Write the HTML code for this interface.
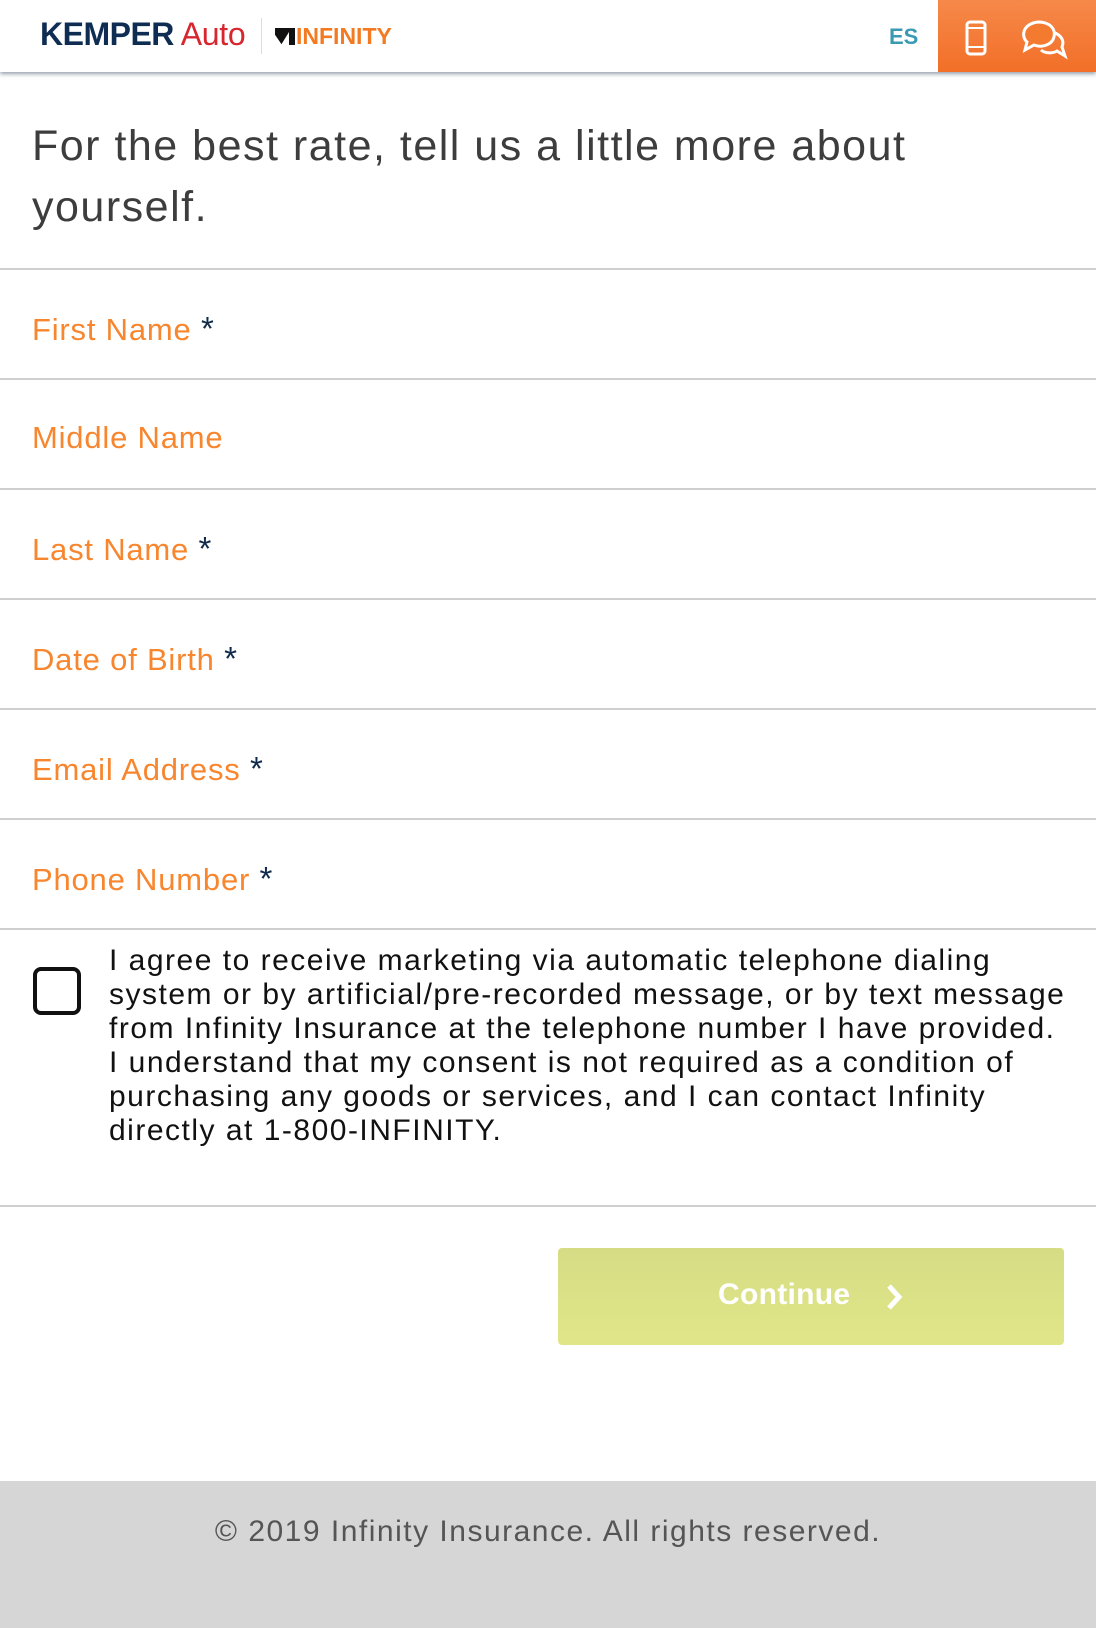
<!DOCTYPE html>
<html><head><meta charset="utf-8"><style>
*{margin:0;padding:0;box-sizing:border-box}
body{width:1096px;height:1628px;background:#fff;font-family:"Liberation Sans",sans-serif;position:relative;overflow:hidden}
.hdr{position:absolute;left:0;top:0;width:1096px;height:72px;background:#fff;box-shadow:0 2px 4px rgba(60,80,100,.55);z-index:2}
.abs{position:absolute}
h1{position:absolute;left:32px;top:116px;font-weight:normal;font-size:43px;line-height:61px;color:#3d3d3d;width:1050px;letter-spacing:1.5px}
.line{position:absolute;left:0;width:1096px;height:2px;background:#cfcfcf}
.lbl{position:absolute;left:32px;font-size:31px;color:#f7862e;letter-spacing:0.8px}
.lbl b{font-weight:normal;color:#0f2a4a;font-size:33px}
.cons{position:absolute;left:109px;top:944px;font-size:30px;line-height:34px;color:#111;white-space:nowrap;letter-spacing:1.5px}
</style></head><body>
<div class="hdr">
 <div class="abs" style="left:40px;top:16px;font-size:32px;font-weight:bold;color:#0f2d52;letter-spacing:-0.5px">KEMPER<span style="font-weight:normal;color:#d8262f;letter-spacing:-0.3px"> Auto</span></div>
 <div class="abs" style="left:261px;top:18px;width:1px;height:36px;background:#ddd"></div>
 <div class="abs" style="left:275px;top:28px;width:20px;height:17px;background:#111;clip-path:polygon(0 0,100% 0,100% 100%,35% 100%,0 40%)"></div>
 <div class="abs" style="left:281px;top:32px;width:8px;height:13px;background:#fff;clip-path:polygon(100% 0,100% 100%,0 100%)"></div>
 <div class="abs" style="left:296px;top:23px;font-size:23px;font-weight:bold;color:#f47a22;letter-spacing:0px">INFINITY</div>
 <div class="abs" style="left:889px;top:24px;font-size:22px;font-weight:bold;color:#3a9ab3">ES</div>
 <div class="abs" style="left:938px;top:0;width:158px;height:72px;background:linear-gradient(#f6894a,#f26f27)"></div>
 <svg class="abs" style="left:963px;top:20px" width="26" height="36" viewBox="0 0 26 36"><rect x="4" y="2" width="18" height="32" rx="3" fill="none" stroke="#fff" stroke-width="3"/><rect x="4" y="26" width="18" height="2" fill="#fff"/><rect x="4" y="7" width="18" height="2" fill="#fff"/></svg>
 <svg class="abs" style="left:1018px;top:18px" width="50" height="42" viewBox="0 0 50 42"><path d="M30 14 C42 14 47 22 44 29 L47 38 L39 33 C34 36 26 35 23 32" fill="none" stroke="#fff" stroke-width="3"/><path d="M20 4 C32 4 38 11 36 19 C34 27 24 30 16 27 L7 32 L9 24 C3 19 4 6 20 4Z" fill="#f47a30" stroke="#fff" stroke-width="3"/></svg>
</div>
<h1>For the best rate, tell us a little more about<br>yourself.</h1>
<div class="line" style="top:268px"></div>
<div class="lbl" style="top:310px">First Name <b>*</b></div>
<div class="line" style="top:378px"></div>
<div class="lbl" style="top:420px">Middle Name</div>
<div class="line" style="top:488px"></div>
<div class="lbl" style="top:530px">Last Name <b>*</b></div>
<div class="line" style="top:598px"></div>
<div class="lbl" style="top:640px">Date of Birth <b>*</b></div>
<div class="line" style="top:708px"></div>
<div class="lbl" style="top:750px">Email Address <b>*</b></div>
<div class="line" style="top:818px"></div>
<div class="lbl" style="top:860px">Phone Number <b>*</b></div>
<div class="line" style="top:928px"></div>
<div class="abs" style="left:33px;top:967px;width:48px;height:48px;border:4px solid #111;border-radius:8px"></div>
<div class="cons">I agree to receive marketing via automatic telephone dialing<br>system or by artificial/pre-recorded message, or by text message<br>from Infinity Insurance at the telephone number I have provided.<br>I understand that my consent is not required as a condition of<br>purchasing any goods or services, and I can contact Infinity<br>directly at 1-800-INFINITY.</div>
<div class="line" style="top:1205px"></div>
<div class="abs" style="left:558px;top:1248px;width:506px;height:97px;background:linear-gradient(#d6dc84,#e0e688);border-radius:4px"></div>
<div class="abs" style="left:718px;top:1278px;font-size:30px;font-weight:bold;color:#fff;letter-spacing:0.3px">Continue</div>
<svg class="abs" style="left:884px;top:1283px" width="20" height="28" viewBox="0 0 20 28"><path d="M5 3 L15 14 L5 25" fill="none" stroke="#fff" stroke-width="5"/></svg>
<div class="abs" style="left:0;top:1481px;width:1096px;height:147px;background:#d6d6d6"></div>
<div class="abs" style="left:0;top:1515px;width:1096px;text-align:center;font-size:30px;color:#555;letter-spacing:1.5px">© 2019 Infinity Insurance. All rights reserved.</div>
</body></html>
